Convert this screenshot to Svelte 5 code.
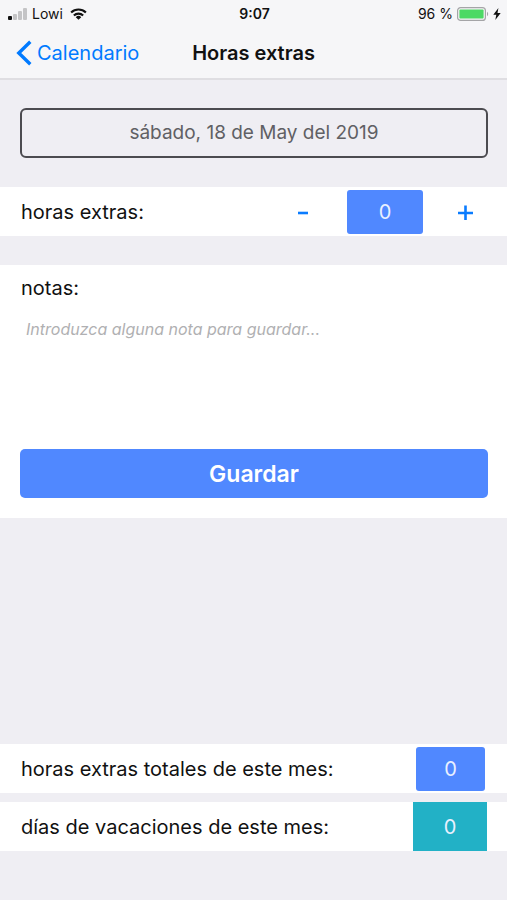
<script lang="ts">
    let hours = $state(0);
    let note = $state('');
    let totalHours = $state(0);
    let holidays = 0;

    function changeHours(step: number) {
        hours = Math.max(0, hours + step);
    }

    function save() {
        totalHours += hours;
        hours = 0;
        note = '';
    }
</script>

<div class="screen">
    <header>
        <div class="status">
            <div class="carrier">
                <svg width="20" height="12" viewBox="0 0 20 12" aria-hidden="true">
                    <rect x="0" y="8" width="4" height="4" rx="1" fill="#111" />
                    <rect x="5" y="6" width="4" height="6" rx="1" fill="#c4c4c6" />
                    <rect x="10" y="3" width="4" height="9" rx="1" fill="#c4c4c6" />
                    <rect x="15" y="0" width="4" height="12" rx="1" fill="#c4c4c6" />
                </svg>
                <span>Lowi</span>
                <svg class="wifi" width="17" height="12" viewBox="0 0 18 13" aria-hidden="true">
                    <g fill="none" stroke="#111" stroke-width="2.3">
                        <path d="M1 4.9a11.4 11.4 0 0 1 16 0" />
                        <path d="M4 8.1a7.1 7.1 0 0 1 10 0" />
                    </g>
                    <path d="M9 12.8 6 9.9a4.3 4.3 0 0 1 6 0z" fill="#111" />
                </svg>
            </div>
            <time>9:07</time>
            <div class="power">
                <span>96 %</span>
                <svg width="32" height="14" viewBox="0 0 32 14" aria-hidden="true">
                    <rect x="0.6" y="0.6" width="27.8" height="12.8" rx="3" fill="#f6f6f7" stroke="#a5a5a7" stroke-width="1.2" />
                    <rect x="2.4" y="2.4" width="24.2" height="9.2" rx="1" fill="#4cd964" />
                    <path d="M30 4.8a2.6 2.6 0 0 1 0 4.4z" fill="#a5a5a7" />
                </svg>
                <svg width="8" height="12" viewBox="0 0 8 12" aria-hidden="true">
                    <path d="M5.4 0 0.3 6.8h3L2.3 12 7.7 5H4.5z" fill="#111" />
                </svg>
            </div>
        </div>
        <nav>
            <a href="#calendario">
                <svg width="16" height="26" viewBox="0 0 16 26" aria-hidden="true">
                    <path d="M14.3 1.8 2.8 13l11.5 11.2" fill="none" stroke="#007aff" stroke-width="3.4" />
                </svg>
                Calendario
            </a>
            <h1>Horas extras</h1>
        </nav>
    </header>

    <main>
        <button class="date">sábado, 18 de May del 2019</button>

        <section class="row">
            <span>horas extras:</span>
            <div class="stepper">
                <button aria-label="menos" onclick={() => changeHours(-1)}>
                    <svg width="16" height="16" viewBox="0 0 16 16"><path d="M3 9h10" /></svg>
                </button>
                <output class="box">{hours}</output>
                <button aria-label="más" onclick={() => changeHours(1)}>
                    <svg width="16" height="16" viewBox="0 0 16 16"><path d="M1 9h15M8.5 1.5v14.5" /></svg>
                </button>
            </div>
        </section>

        <section class="notes">
            <label for="note">notas:</label>
            <textarea id="note" placeholder="Introduzca alguna nota para guardar..." bind:value={note}></textarea>
            <button class="save" onclick={save}>Guardar</button>
        </section>

        <section class="totals">
            <div class="row">
                <span>horas extras totales de este mes:</span>
                <output class="box total">{totalHours}</output>
            </div>
            <div class="row">
                <span>días de vacaciones de este mes:</span>
                <output class="box days">{holidays}</output>
            </div>
        </section>
    </main>
</div>

<style>
    :global(body) {
        margin: 0;
        background: #efeef3;
    }
    .screen {
        min-height: 100vh;
        display: flex;
        flex-direction: column;
        color: #111;
        font-family: Inter, "Liberation Sans", sans-serif;
        font-size: 20px;
        line-height: 24px;
    }
    button, textarea {
        font: inherit;
        margin: 0;
        box-sizing: border-box;
    }
    button {
        border: none;
        cursor: pointer;
    }
    header {
        background: #f6f6f8;
        border-bottom: 2px solid #dfdee2;
    }
    .status {
        display: grid;
        grid-template-columns: 1fr auto 1fr;
        align-items: center;
        height: 28px;
        padding: 0 6px 0 8px;
        font-size: 14px;
        line-height: 20px;
    }
    .status time {
        font-weight: 600;
    }
    .carrier, .power {
        display: flex;
        align-items: center;
        gap: 4px;
    }
    .wifi {
        margin-left: 3px;
    }
    .power {
        justify-content: flex-end;
    }
    nav {
        display: grid;
        grid-template-columns: 1fr auto 1fr;
        align-items: center;
        height: 50px;
        padding: 0 16px;
    }
    nav a {
        display: flex;
        align-items: center;
        gap: 5px;
        color: #007aff;
        text-decoration: none;
    }
    h1 {
        margin: 0;
        font-size: 20px;
        font-weight: 600;
    }
    main {
        flex: 1;
        display: flex;
        flex-direction: column;
        gap: 29px;
        padding: 28px 0 49px;
    }
    .date {
        margin: 0 19px 0 20px;
        height: 50px;
        background: none;
        border: 2px solid #4c4b50;
        border-radius: 6px;
        color: #606064;
        font-size: 19px;
    }
    .row {
        display: flex;
        align-items: center;
        justify-content: space-between;
        height: 49px;
        padding: 0 20px 0 21px;
        background: #fff;
    }
    .stepper {
        display: flex;
        align-items: center;
    }
    .stepper button {
        display: flex;
        align-items: center;
        justify-content: center;
        width: 44px;
        height: 44px;
        padding: 0;
        background: none;
    }
    .stepper path {
        fill: none;
        stroke: #0a7cff;
        stroke-width: 2.6;
    }
    .stepper .box {
        margin: 0 20px 0 22px;
    }
    .box {
        display: flex;
        align-items: center;
        justify-content: center;
        width: 76px;
        height: 44px;
        border-radius: 3px;
        background: #5088ff;
        color: #e9f0ff;
    }
    .notes {
        display: flex;
        flex-direction: column;
        padding: 11px 19px 20px 20px;
        background: #fff;
    }
    .notes label {
        padding-left: 1px;
    }
    textarea {
        height: 142px;
        margin: 7px 0 0;
        padding: 10px 6px;
        border: none;
        outline: none;
        resize: none;
        background: none;
        font-size: 16px;
        line-height: 24px;
    }
    textarea::placeholder {
        color: #b0b0b2;
        font-style: italic;
        opacity: 1;
    }
    .save {
        height: 49px;
        border-radius: 5px;
        background: #5088ff;
        color: #fff;
        font-size: 23px;
        font-weight: 600;
    }
    .totals {
        display: flex;
        flex-direction: column;
        gap: 9px;
        margin-top: auto;
    }
    .total {
        width: 69px;
        margin-right: 2px;
    }
    .days {
        width: 74px;
        height: 49px;
        border-radius: 0;
        background: #22b1c6;
    }
</style>
